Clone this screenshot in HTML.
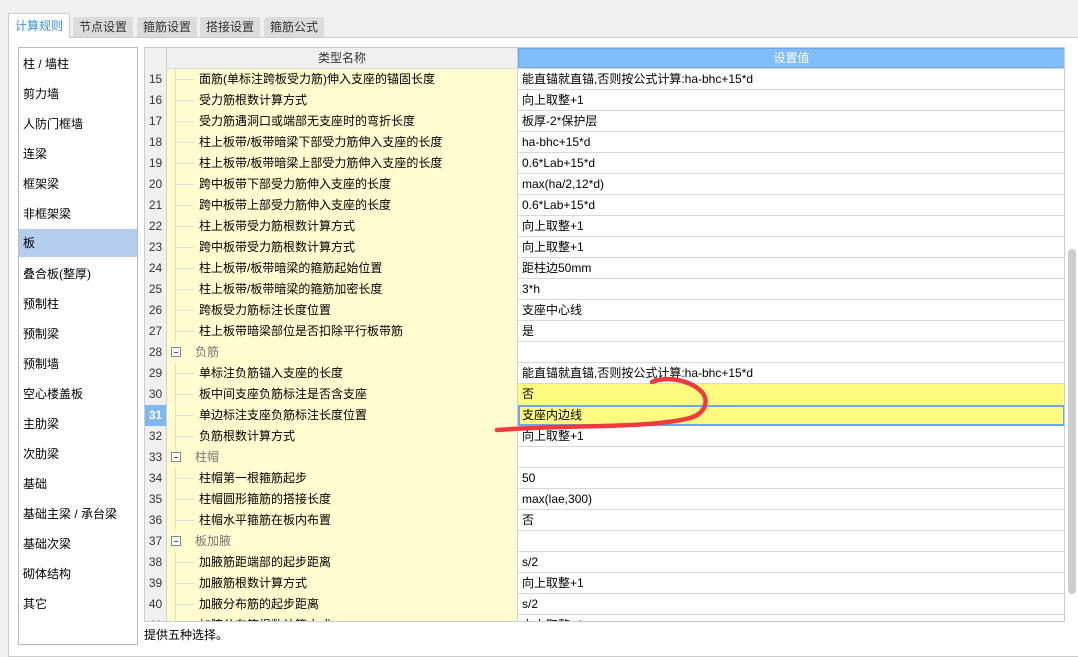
<!DOCTYPE html>
<html><head><meta charset="utf-8"><style>
*{margin:0;padding:0;box-sizing:border-box}
body{width:1078px;height:651px;background:#f0f0f0;font-family:"Liberation Sans","Noto Sans CJK SC",sans-serif;font-size:12px;color:#000;position:relative;overflow:hidden}
.tab{position:absolute;top:17px;height:20px;background:#dcdcdc;color:#333;font-size:12px;line-height:20px;text-align:center;border-radius:2px 2px 0 0}
.tab.act{top:13px;height:25px;background:#fff;color:#3a8ee6;border:1px solid #ccc;border-bottom:none;line-height:24px;z-index:2}
.panel{position:absolute;left:8px;top:37px;width:1080px;height:620px;background:#fff;border:1px solid #ccc}
.list{position:absolute;left:18px;top:47px;width:120px;height:598px;border:1px solid #bbb;background:#fff}
.list div{position:absolute;left:3px;width:114px;height:28px;line-height:28px;padding-left:1px}
.list .sel{background:#b4cdec;left:0;width:118px;padding-left:4px}
.grid{position:absolute;left:144px;top:47px;width:921px;height:575px;border:1px solid #ccc;overflow:hidden;background:#fff}
.r{position:absolute;left:0;width:920px;height:21px;border-bottom:1px solid #d8d8d8}
.n{position:absolute;left:0;width:22px;height:21px;background:#f0f0f0;border-right:1px solid #d0d0d0;text-align:center;line-height:20px;color:#333}
.k{position:absolute;left:22px;width:351px;height:21px;background:#fffcd0;border-right:1px solid #d0d0d0;line-height:20px}
.k span{position:absolute;left:32px}
.k i{position:absolute;left:8px;top:0;width:1px;height:21px;background:#e6e0b0}
.k b{position:absolute;left:9px;top:10px;width:18px;height:1px;background:#ddd}
.v{position:absolute;left:373px;width:547px;height:21px;line-height:20px;padding-left:4px}
.grp span{left:28px;color:#777}
.grp em{position:absolute;left:4px;top:5px;width:10px;height:10px;border:1px solid #888;background:#fff}
.grp em:after{content:"";position:absolute;left:2px;top:4px;width:4px;height:1px;background:#555}
</style></head><body>
<div class="panel"></div>
<div class="tab act" style="left:8px;width:62px">计算规则</div>
<div class="tab" style="left:73px;width:60px">节点设置</div>
<div class="tab" style="left:137px;width:60px">箍筋设置</div>
<div class="tab" style="left:200px;width:60px">搭接设置</div>
<div class="tab" style="left:264px;width:60px">箍筋公式</div>

<div class="list">
<div style="top:2px">柱 / 墙柱</div>
<div style="top:32px">剪力墙</div>
<div style="top:62px">人防门框墙</div>
<div style="top:92px">连梁</div>
<div style="top:122px">框架梁</div>
<div style="top:152px">非框架梁</div>
<div class="sel" style="top:181px">板</div>
<div style="top:212px">叠合板(整厚)</div>
<div style="top:242px">预制柱</div>
<div style="top:272px">预制梁</div>
<div style="top:302px">预制墙</div>
<div style="top:332px">空心楼盖板</div>
<div style="top:362px">主肋梁</div>
<div style="top:392px">次肋梁</div>
<div style="top:422px">基础</div>
<div style="top:452px">基础主梁 / 承台梁</div>
<div style="top:482px">基础次梁</div>
<div style="top:512px">砌体结构</div>
<div style="top:542px">其它</div>
</div>

<div class="grid">
<div class="r" style="top:0;height:21px;background:#f0f0f0">
<div class="n" style="border-bottom:none"></div>
<div style="position:absolute;left:22px;width:351px;height:20px;text-align:center;line-height:20px;color:#333;border-right:1px solid #d0d0d0">类型名称</div>
<div style="position:absolute;left:373px;width:547px;height:20px;background:#80bcf8;border:1px solid #6aa8e8;text-align:center;line-height:18px;color:#fff">设置值</div>
</div>
<div class="r" style="top:21px"><div class="n">15</div><div class="k"><i></i><b></b><span>面筋(单标注跨板受力筋)伸入支座的锚固长度</span></div><div class="v">能直锚就直锚,否则按公式计算:ha-bhc+15*d</div></div>
<div class="r" style="top:42px"><div class="n">16</div><div class="k"><i></i><b></b><span>受力筋根数计算方式</span></div><div class="v">向上取整+1</div></div>
<div class="r" style="top:63px"><div class="n">17</div><div class="k"><i></i><b></b><span>受力筋遇洞口或端部无支座时的弯折长度</span></div><div class="v">板厚-2*保护层</div></div>
<div class="r" style="top:84px"><div class="n">18</div><div class="k"><i></i><b></b><span>柱上板带/板带暗梁下部受力筋伸入支座的长度</span></div><div class="v">ha-bhc+15*d</div></div>
<div class="r" style="top:105px"><div class="n">19</div><div class="k"><i></i><b></b><span>柱上板带/板带暗梁上部受力筋伸入支座的长度</span></div><div class="v">0.6*Lab+15*d</div></div>
<div class="r" style="top:126px"><div class="n">20</div><div class="k"><i></i><b></b><span>跨中板带下部受力筋伸入支座的长度</span></div><div class="v">max(ha/2,12*d)</div></div>
<div class="r" style="top:147px"><div class="n">21</div><div class="k"><i></i><b></b><span>跨中板带上部受力筋伸入支座的长度</span></div><div class="v">0.6*Lab+15*d</div></div>
<div class="r" style="top:168px"><div class="n">22</div><div class="k"><i></i><b></b><span>柱上板带受力筋根数计算方式</span></div><div class="v">向上取整+1</div></div>
<div class="r" style="top:189px"><div class="n">23</div><div class="k"><i></i><b></b><span>跨中板带受力筋根数计算方式</span></div><div class="v">向上取整+1</div></div>
<div class="r" style="top:210px"><div class="n">24</div><div class="k"><i></i><b></b><span>柱上板带/板带暗梁的箍筋起始位置</span></div><div class="v">距柱边50mm</div></div>
<div class="r" style="top:231px"><div class="n">25</div><div class="k"><i></i><b></b><span>柱上板带/板带暗梁的箍筋加密长度</span></div><div class="v">3*h</div></div>
<div class="r" style="top:252px"><div class="n">26</div><div class="k"><i></i><b></b><span>跨板受力筋标注长度位置</span></div><div class="v">支座中心线</div></div>
<div class="r" style="top:273px"><div class="n">27</div><div class="k"><i></i><b></b><span>柱上板带暗梁部位是否扣除平行板带筋</span></div><div class="v">是</div></div>
<div class="r" style="top:294px"><div class="n">28</div><div class="k grp"><em></em><span>负筋</span></div><div class="v"></div></div>
<div class="r" style="top:315px"><div class="n">29</div><div class="k"><i></i><b></b><span>单标注负筋锚入支座的长度</span></div><div class="v">能直锚就直锚,否则按公式计算:ha-bhc+15*d</div></div>
<div class="r" style="top:336px"><div class="n">30</div><div class="k"><i></i><b></b><span>板中间支座负筋标注是否含支座</span></div><div class="v" style="background:#fffa80">否</div></div>
<div class="r" style="top:357px"><div class="n" style="background:#7db8f0;color:#fff;font-weight:bold">31</div><div class="k"><i></i><b></b><span>单边标注支座负筋标注长度位置</span></div><div class="v" style="background:#fffa80;border:2px solid #6aa8e8;line-height:17px;padding-left:2px">支座内边线</div></div>
<div class="r" style="top:378px"><div class="n">32</div><div class="k"><i></i><b></b><span>负筋根数计算方式</span></div><div class="v">向上取整+1</div></div>
<div class="r" style="top:399px"><div class="n">33</div><div class="k grp"><em></em><span>柱帽</span></div><div class="v"></div></div>
<div class="r" style="top:420px"><div class="n">34</div><div class="k"><i></i><b></b><span>柱帽第一根箍筋起步</span></div><div class="v">50</div></div>
<div class="r" style="top:441px"><div class="n">35</div><div class="k"><i></i><b></b><span>柱帽圆形箍筋的搭接长度</span></div><div class="v">max(lae,300)</div></div>
<div class="r" style="top:462px"><div class="n">36</div><div class="k"><i></i><b></b><span>柱帽水平箍筋在板内布置</span></div><div class="v">否</div></div>
<div class="r" style="top:483px"><div class="n">37</div><div class="k grp"><em></em><span>板加腋</span></div><div class="v"></div></div>
<div class="r" style="top:504px"><div class="n">38</div><div class="k"><i></i><b></b><span>加腋筋距端部的起步距离</span></div><div class="v">s/2</div></div>
<div class="r" style="top:525px"><div class="n">39</div><div class="k"><i></i><b></b><span>加腋筋根数计算方式</span></div><div class="v">向上取整+1</div></div>
<div class="r" style="top:546px"><div class="n">40</div><div class="k"><i></i><b></b><span>加腋分布筋的起步距离</span></div><div class="v">s/2</div></div>
<div class="r" style="top:567px"><div class="n">41</div><div class="k"><i></i><b></b><span>加腋分布筋根数计算方式</span></div><div class="v">向上取整+1</div></div>
</div>
<div style="position:absolute;left:1065px;top:48px;width:13px;height:574px;background:#fff"></div>
<div style="position:absolute;left:1068px;top:249px;width:8px;height:345px;background:#cdcdcd;border-radius:4px"></div>
<div style="position:absolute;left:144px;top:627px;line-height:16px">提供五种选择。</div>
<svg style="position:absolute;left:0;top:0" width="1078" height="651"><path d="M652 382 C668 376 690 380 702 392 C710 402 704 414 690 418 C660 426 600 426 560 427 C530 428 510 429 497 430" fill="none" stroke="#f03a3e" stroke-width="4.5" stroke-linecap="round"/></svg>
</body></html>
